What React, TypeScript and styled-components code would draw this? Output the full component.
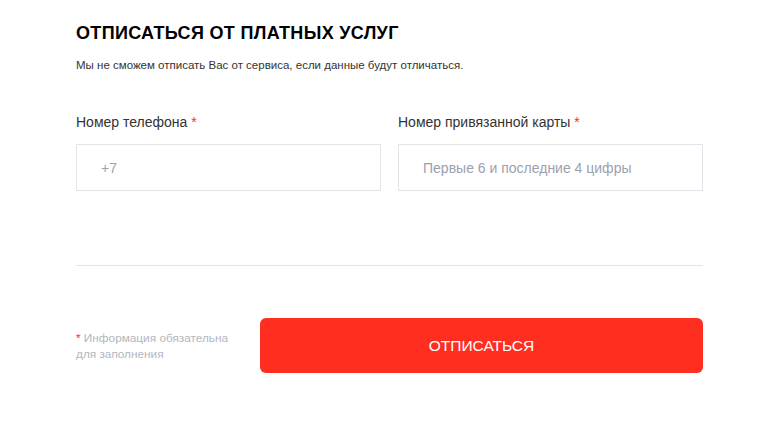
import styled, { createGlobalStyle } from "styled-components";

const colors = {
  red: "#ff2e20",
  text: "#000000",
  label: "#333333",
  muted: "#b3b6be",
  placeholder: "#9ca1ad",
  border: "#e3e4ea",
};

const GlobalStyle = createGlobalStyle`
  body {
    margin: 0;
    background: #ffffff;
    font-family: "Liberation Sans", Arial, sans-serif;
  }
`;

const StyledPage = styled.main`
  box-sizing: border-box;
  width: 768px;
  padding: 22px 0 0 76px;
`;

const StyledForm = styled.form`
  width: 627px;
  display: flex;
  flex-direction: column;
`;

const StyledTitle = styled.h1`
  margin: 0;
  font-size: 18px;
  line-height: 22px;
  font-weight: 700;
  letter-spacing: 0.32px;
  color: ${colors.text};
`;

const StyledNote = styled.p`
  margin: 13px 0 0;
  font-size: 11.5px;
  line-height: 16px;
  color: ${colors.label};
`;

const StyledFields = styled.div`
  display: grid;
  grid-template-columns: 1fr 1fr;
  gap: 17px;
  margin-top: 40px;
`;

const StyledField = styled.label`
  display: flex;
  flex-direction: column;
  gap: 13px;
`;

const StyledLabel = styled.span`
  font-size: 14px;
  line-height: 18px;
  color: ${colors.label};
`;

const StyledStar = styled.span`
  color: ${colors.red};
`;

const StyledInput = styled.input`
  box-sizing: border-box;
  height: 47px;
  width: 100%;
  padding: 0 24px;
  border: 1px solid ${colors.border};
  border-radius: 0;
  font-family: inherit;
  font-size: 14px;
  color: ${colors.label};
  outline: none;

  &::placeholder {
    color: ${colors.placeholder};
  }
`;

const StyledDivider = styled.hr`
  margin: 74px 0 0;
  border: 0;
  border-top: 1px solid ${colors.border};
`;

const StyledBottom = styled.div`
  display: flex;
  align-items: center;
  gap: 24px;
  margin-top: 52px;
`;

const StyledHint = styled.p`
  margin: 0;
  width: 160px;
  display: flex;
  flex-direction: column;
  font-size: 11.8px;
  line-height: 16px;
  color: ${colors.muted};
`;

const StyledHintLine = styled.span`
  white-space: nowrap;
`;

const StyledButton = styled.button`
  flex: 1;
  height: 55px;
  border: 0;
  border-radius: 6px;
  background: ${colors.red};
  color: #ffffff;
  font-family: inherit;
  font-size: 15.5px;
  text-transform: uppercase;
  cursor: pointer;

  &:hover {
    background: #f02416;
  }
`;

export default function App() {
  return (
    <StyledPage>
      <GlobalStyle />
      <StyledForm onSubmit={(e) => e.preventDefault()}>
        <StyledTitle>ОТПИСАТЬСЯ ОТ ПЛАТНЫХ УСЛУГ</StyledTitle>
        <StyledNote>Мы не сможем отписать Вас от сервиса, если данные будут отличаться.</StyledNote>
        <StyledFields>
          <StyledField>
            <StyledLabel>
              Номер телефона <StyledStar>*</StyledStar>
            </StyledLabel>
            <StyledInput type="tel" placeholder="+7" />
          </StyledField>
          <StyledField>
            <StyledLabel>
              Номер привязанной карты <StyledStar>*</StyledStar>
            </StyledLabel>
            <StyledInput type="text" placeholder="Первые 6 и последние 4 цифры" />
          </StyledField>
        </StyledFields>
        <StyledDivider />
        <StyledBottom>
          <StyledHint>
            <StyledHintLine>
              <StyledStar>*</StyledStar> Информация обязательна
            </StyledHintLine>
            <StyledHintLine>для заполнения</StyledHintLine>
          </StyledHint>
          <StyledButton type="submit">Отписаться</StyledButton>
        </StyledBottom>
      </StyledForm>
    </StyledPage>
  );
}
